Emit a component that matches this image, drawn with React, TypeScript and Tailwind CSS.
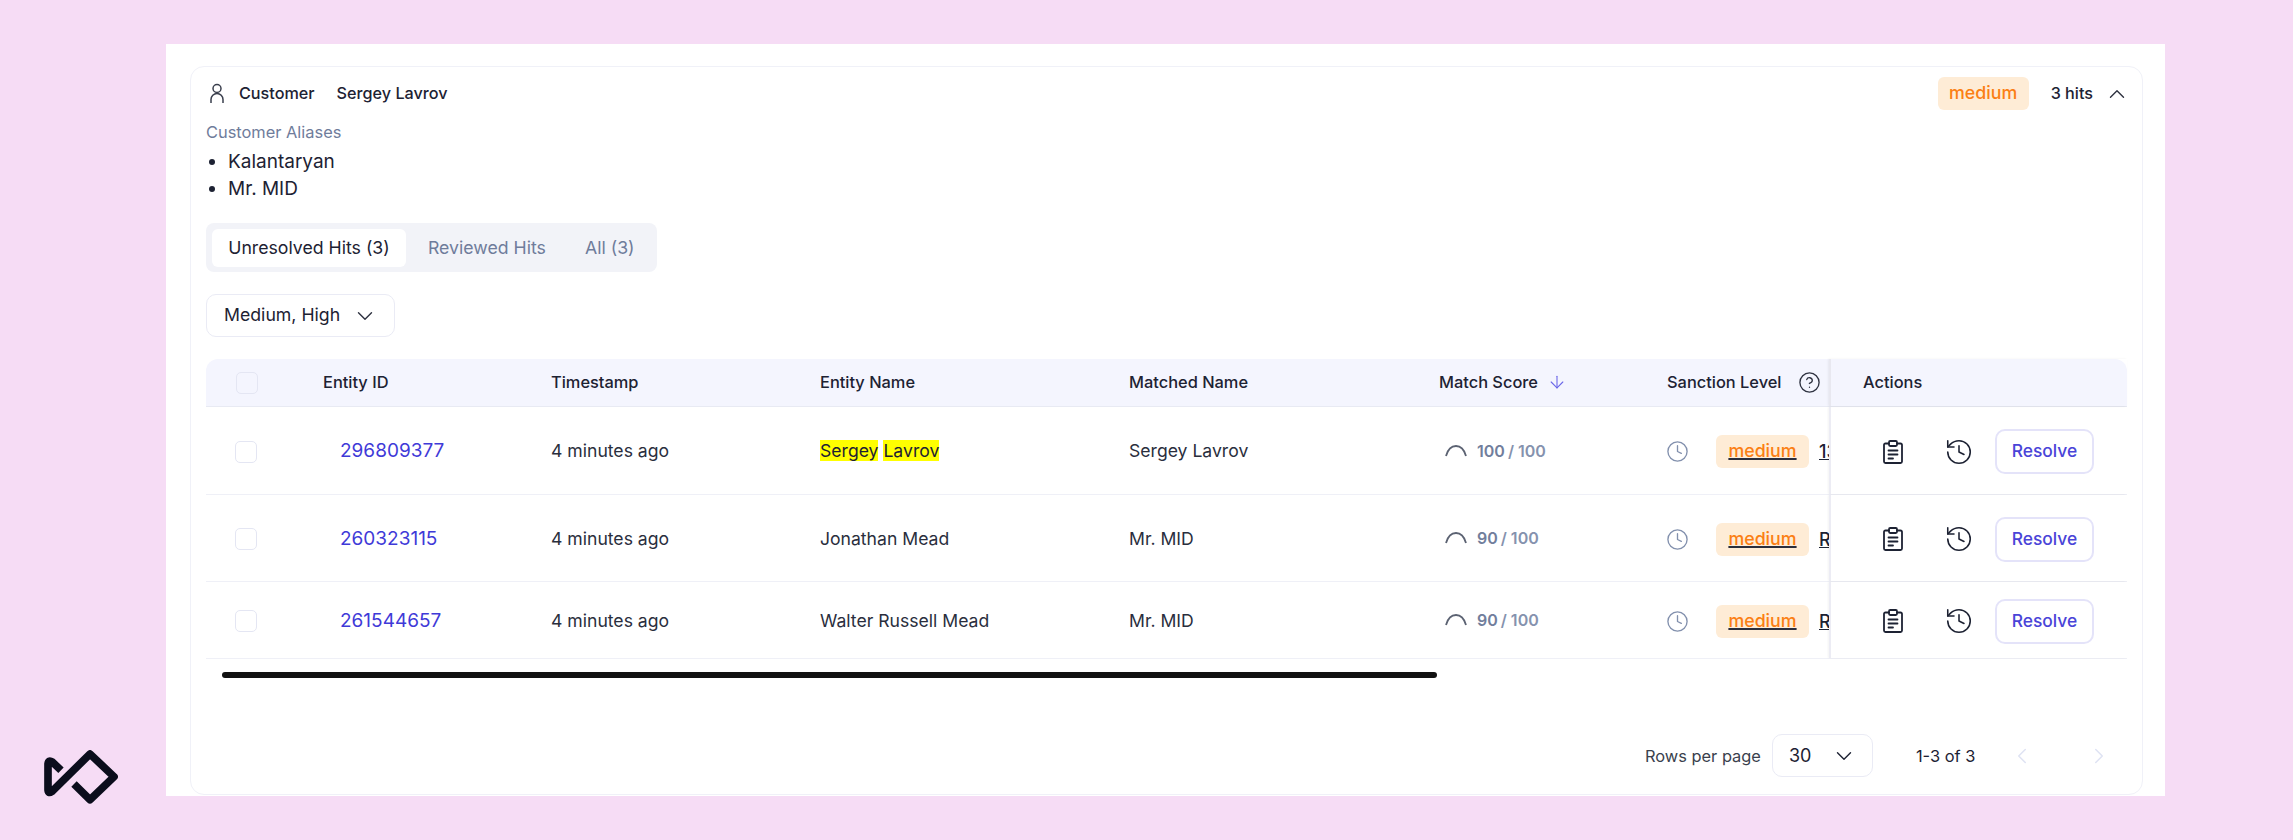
import { ChevronDown, ChevronUp, ChevronLeft, ChevronRight, ArrowDown, CircleHelp, Clock, History } from 'lucide-react';

const rows = [
  { id: '296809377', name: 'Sergey Lavrov', matched: 'Sergey Lavrov', score: 100, cut: '13', height: 'h-[88px]', highlight: true },
  { id: '260323115', name: 'Jonathan Mead', matched: 'Mr. MID', score: 90, cut: 'R', height: 'h-[87px]', highlight: false },
  { id: '261544657', name: 'Walter Russell Mead', matched: 'Mr. MID', score: 90, cut: 'R', height: 'h-[77px]', highlight: false },
];

const gridCols = 'grid grid-cols-[117px_228px_269px_309px_310px_228px_162px_298px]';

const Logo = () => (
  <svg width="75" height="54" viewBox="132 330 225 162" fill="none" className="absolute left-[44px] top-[750px]">
    <path
      d="M222 432 L270 479 L342 410 L270 342 L155 455 Q145 462 144 450 L144 372 Q145 358 157 366 L183 391"
      stroke="#0b0d1c"
      strokeWidth="23"
      strokeLinejoin="round"
    />
  </svg>
);

const PersonIcon = () => (
  <svg width="16" height="21" viewBox="0 0 16 21" fill="none" stroke="#3a3f4d" strokeWidth="1.5" className="mr-[14px] ml-[3px]">
    <circle cx="8" cy="5.5" r="4" />
    <path d="M2 20 V16.5 A6 6 0 0 1 14 16.5 V20" />
  </svg>
);

const ClipboardIcon = () => (
  <svg width="20" height="24" viewBox="0 0 20 24" fill="none" stroke="#1d2233" strokeWidth="1.8" strokeLinecap="round" strokeLinejoin="round">
    <path d="M6 3.5 H2.5 Q1 3.5 1 5 V21.5 Q1 23 2.5 23 H17.5 Q19 23 19 21.5 V5 Q19 3.5 17.5 3.5 H14" />
    <rect x="6" y="1" width="8" height="5" rx="1.2" />
    <path d="M5.5 10.5 H14.5 M5.5 14.5 H14.5 M5.5 18.5 H10" />
  </svg>
);

const Checkbox = ({ header }: { header?: boolean }) => (
  <div className={`w-[22px] h-[22px] rounded-[5px] border border-[#e4e6f3] ${header ? 'bg-transparent ml-[30px]' : 'bg-white ml-[29px] mt-[2px]'}`} />
);

const App = () => {
  return (
    <div className="relative h-[840px] bg-[#f6dcf5] pt-[44px] pl-[166px] font-['Inter',sans-serif] overflow-hidden">
      <div className="w-[1999px] h-[752px] bg-white pt-[22px] pl-[24px]">
        <div className="w-[1953px] h-[729px] border border-[#f0f1f8] rounded-[14px] pl-[15px] pr-[15px]">
          {/* Header */}
          <div className="flex items-center justify-between h-[53px]">
            <div className="flex items-center text-[#1d2233] text-[16.2px] font-medium">
              <PersonIcon />
              <span>Customer</span>
              <span className="ml-[22px]">Sergey Lavrov</span>
            </div>
            <div className="flex items-center mr-[-3px]">
              <span className="h-[33px] w-[91px] flex items-center justify-center rounded-[6px] bg-[#feecd6] text-[#fb7f14] text-[17.8px] font-medium">medium</span>
              <span className="ml-[22px] text-[#1d2233] text-[16.2px] font-medium">3 hits</span>
              <ChevronUp size={26} strokeWidth={1.3} className="ml-[11px] text-[#2e3240]" />
            </div>
          </div>

          {/* Aliases */}
          <div className="text-[16.4px] leading-[24px] text-[#6f7c9b]">Customer Aliases</div>
          <ul className="list-disc pl-[22px] text-[19px] leading-[27px] text-[#1d2233] mt-[4px]">
            <li>Kalantaryan</li>
            <li>Mr. MID</li>
          </ul>

          {/* Tabs */}
          <div className="mt-[21px] flex items-center w-[451px] h-[49px] bg-[#f2f3f8] rounded-[8px] pl-[6px] text-[17.7px]">
            <div className="h-[38px] w-[194px] pt-[2px] flex items-center justify-center bg-white rounded-[6px] text-[#1d2233]">Unresolved Hits (3)</div>
            <div className="ml-[22px] pt-[2px] text-[#6f7c9b]">Reviewed Hits</div>
            <div className="ml-[39px] pt-[2px] text-[#6f7c9b]">All (3)</div>
          </div>

          {/* Filter */}
          <div className="mt-[22px] flex items-center w-[189px] h-[43px] border border-[#eaebf5] rounded-[10px] pl-[17px] text-[17.7px] text-[#1d2233]">
            <span>Medium, High</span>
            <ChevronDown size={26} strokeWidth={1.3} className="ml-[12px] text-[#2e3240]" />
          </div>

          {/* Table */}
          <div className="mt-[22px] w-[1921px]">
            <div className={`${gridCols} h-[48px] items-center bg-[#f4f5fe] rounded-t-[12px] border-b border-[#e8eaf3] text-[16.4px] font-medium text-[#1d2233]`}>
              <Checkbox header />
              <span>Entity ID</span>
              <span>Timestamp</span>
              <span>Entity Name</span>
              <span>Matched Name</span>
              <span className="flex items-center">
                Match Score
                <ArrowDown size={20} strokeWidth={1.3} className="ml-[9px] text-[#6a66e8]" />
              </span>
              <span className="flex items-center">
                Sanction Level
                <CircleHelp size={23} strokeWidth={1.4} className="ml-[16px] text-[#2e3240]" />
              </span>
              <span className="h-full flex items-center pl-[32px] border-l-[2px] border-[#e8e8f0] shadow-[-1px_0_2px_rgba(0,0,0,0.06)]">Actions</span>
            </div>

            {rows.map((r) => (
              <div key={r.id} className={`${gridCols} ${r.height} items-center border-b border-[#eff0f7] text-[17.6px] text-[#2a2e3d]`}>
                <Checkbox />
                <span className="pl-[17px] pt-[2px] text-[19px] text-[#3f3ad8]">{r.id}</span>
                <span className="pt-[2px]">4 minutes ago</span>
                {r.highlight ? (
                  <span className="pt-[2px]">
                    <span className="bg-[#ffff00] text-[#1d2233]">Sergey</span> <span className="bg-[#ffff00] text-[#1d2233]">Lavrov</span>
                  </span>
                ) : (
                  <span className="pt-[2px]">{r.name}</span>
                )}
                <span className="pt-[2px]">{r.matched}</span>
                <span className="flex items-center pl-[6px] font-semibold text-[#8592ae] text-[16px]">
                  <svg width="22" height="12" viewBox="0 0 22 12" fill="none" className="mr-[10px]">
                    <path d="M1 11 C3 4 7 1 11 1 C15 1 19 4 21 11" stroke="#5b6272" strokeWidth="1.8" />
                  </svg>
                  <span className="text-[#717e9c]">{r.score}</span>
                  <span className="ml-[3px] mr-[4px]">/</span>
                  100
                </span>
                <span className="flex items-center overflow-hidden h-full pt-[2px]">
                  <Clock size={23} strokeWidth={1.4} className="text-[#8290ad] shrink-0 -ml-[1px]" />
                  <span className="ml-[27px] h-[33px] w-[93px] shrink-0 flex items-center justify-center rounded-[6px] bg-[#feecd6] text-[#fb7f14] text-[17.8px] font-medium underline decoration-[#2a2e3d] decoration-[1.5px]">medium</span>
                  <span className="ml-[10px] underline text-[18px] font-medium text-[#1d2233] whitespace-nowrap">{r.cut}</span>
                </span>
                <span className="h-full pt-[2px] flex items-center pl-[52px] border-l-[2px] border-[#ececf4] shadow-[-1px_0_2px_rgba(0,0,0,0.05)]">
                  <ClipboardIcon />
                  <History size={30} strokeWidth={1.25} className="ml-[41px] text-[#1d2233]" />
                  <span className="ml-[21px] w-[99px] h-[45px] flex items-center justify-center rounded-[10px] border-2 border-[#e4e3f9] text-[#4a44d8] text-[17.4px] font-medium">Resolve</span>
                </span>
              </div>
            ))}

            {/* Scrollbar */}
            <div className="mt-[13px] ml-[16px] w-[1215px] h-[6px] rounded-full bg-[#111111]" />
          </div>

          {/* Pagination */}
          <div className="mt-[56px] flex items-center w-[1921px] text-[16.4px] text-[#3a3f4d]">
            <span className="ml-[1439px] pt-[1px]">Rows per page</span>
            <div className="ml-[11px] flex items-center w-[101px] h-[43px] border border-[#eaebf5] rounded-[10px] pl-[16px] text-[18px] text-[#1d2233]">
              <span>30</span>
              <ChevronDown size={26} strokeWidth={1.3} className="ml-[20px]" />
            </div>
            <span className="ml-[43px] pt-[1px] text-[#1d2233]">1-3 of 3</span>
            <ChevronLeft size={26} strokeWidth={1.4} className="ml-[34px] text-[#dfe3f3]" />
            <ChevronRight size={26} strokeWidth={1.4} className="ml-[51px] text-[#dfe3f3]" />
          </div>
        </div>
      </div>
      <Logo />
    </div>
  );
};

export default App;
